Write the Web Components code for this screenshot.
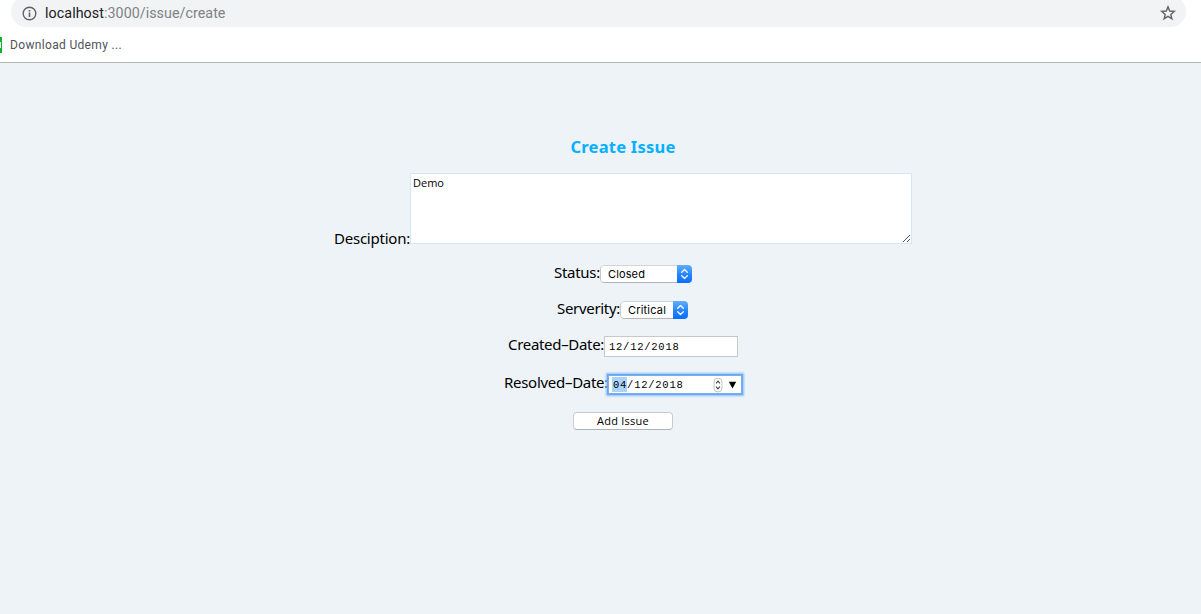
<!DOCTYPE html>
<html lang="en">
<head>
<meta charset="utf-8">
<title>Create Issue</title>
<style>
html,body{margin:0;height:100%;overflow:hidden;background:#eef3f8}
</style>
</head>
<body>
<issue-app></issue-app>
<script>
function define(name, html, setup) {
  const t = document.createElement('template');
  t.innerHTML = html;
  customElements.define(name, class extends HTMLElement {
    connectedCallback() {
      if (this.shadowRoot) return;
      const root = this.attachShadow({ mode: 'open' });
      root.appendChild(t.content.cloneNode(true));
      if (setup) setup(this, root);
    }
  });
}

/* Text tracked so that it fills a given advance width. */
define('fit-text', `<style>:host{display:inline-block;flex:none;white-space:nowrap}span{display:inline-block}</style><span><slot></slot></span>`, (el, root) => {
  const w = Number(el.getAttribute('w'));
  const span = root.querySelector('span');
  const natural = span.getBoundingClientRect().width;
  span.style.letterSpacing = (w - natural) / el.textContent.length + 'px';
  el.style.width = w + 'px';
});

define('browser-bar', `
<style>
:host{display:flex;flex-direction:column;height:63px;box-sizing:border-box;background:#fff;border-bottom:1px solid #b4b4b2;font-family:Roboto,sans-serif;overflow:hidden}
.omni{display:flex;align-items:center;height:31px;margin:-4px 15px 0 11px;border-radius:16px;background:#f1f3f4;padding:0 10px 0 10.5px;box-sizing:border-box;flex:none}
.info{flex:none;margin-top:3px}
.star{margin-top:3px}
.url{margin-left:8.5px;flex:1;font-size:14.3px;line-height:18px;color:#202124;margin-top:3px}
.path{color:#7d8387}
.marks{display:flex;align-items:center;height:18px;margin-top:9px;font-size:12px;line-height:18px;color:#505357}
.fav{width:2px;height:16px;background:#0cb52a;margin-right:8px;display:flex;align-items:center}
.fav i{width:1px;height:6px;background:#fff}
</style>
<div class="omni">
<svg class="info" width="15" height="15" viewBox="0 0 15 15"><circle cx="7.5" cy="7.5" r="6.3" fill="none" stroke="#5f6368" stroke-width="1.4"/><path d="M6.7 6.6h1.6v4.4H6.7zM6.7 4h1.6v1.6H6.7z" fill="#5f6368"/></svg>
<div class="url"><fit-text w="59">localhost</fit-text><fit-text class="path" w="121.5">:3000/issue/create</fit-text></div>
<svg class="star" width="16" height="16" viewBox="0 0 16 16"><path d="M8 1.8L9.7 6l4.6.4-3.5 3 1.1 4.4L8 11.4l-3.9 2.4 1.1-4.4-3.5-3L6.3 6z" fill="none" stroke="#5f6368" stroke-width="1.4"/></svg>
</div>
<div class="marks"><span class="fav"><i></i></span><fit-text w="112">Download Udemy ...</fit-text></div>`);

define('form-row', `
<style>
:host{display:flex;align-items:flex-start;justify-content:flex-start;font:15px/20px "Noto Sans","Open Sans",sans-serif;color:#000}
</style><slot></slot>`);

define('text-area', `
<style>
:host{display:block;position:relative;box-sizing:border-box;width:502px;height:71px;border:1px solid #d0eaf5;background:#fff;padding:2px 2px;font:11px/14px "Open Sans","Noto Sans",sans-serif}
svg{position:absolute;right:0;bottom:0}
</style><slot></slot>
<svg width="9" height="9" viewBox="0 0 9 9" shape-rendering="crispEdges"><path d="M1 7h1v1H1zM2 6h1v1H2zM3 5h1v1H3zM4 4h1v1H4zM5 3h1v1H5zM6 2h1v1H6zM7 1h1v1H7zM5 7h1v1H5zM6 6h1v1H6zM7 5h1v1H7z" fill="#555"/></svg>`);

define('mac-select', `
<style>
:host{display:flex;box-sizing:border-box;height:18px;border-radius:4px;overflow:hidden;background:#fff;font:11px/17px Inter,sans-serif}
.v{flex:1;box-sizing:border-box;border:1px solid #c4c7ca;border-top-color:#d2d5d8;border-bottom-color:#b2b5b8;border-right:0;border-radius:4px 0 0 4px;padding-left:7px}
.b{width:15px;background:linear-gradient(#61aefa,#2385fb 55%,#0a6cff);display:block}
</style>
<div class="v"><slot></slot></div>
<svg class="b" width="15" height="18" viewBox="0 0 15 18"><path d="M4.7 7.3l2.8-2.8 2.8 2.8M4.7 10.7l2.8 2.8 2.8-2.8" fill="none" stroke="#fff" stroke-width="1.3" stroke-linecap="round" stroke-linejoin="round"/></svg>`);

define('date-field', `
<style>
:host{display:flex;align-items:center;box-sizing:border-box;width:134px;height:21px;border:1px solid #c8c8c8;background:#fff;padding-left:4px;font:10.5px/15px "Liberation Mono",monospace;color:#000}
::slotted(fit-text){padding-top:1px;height:14px}
:host([focused]){border-color:#75b0f3;box-shadow:0 0 0 1px #69aaf5,0 0 2px 2px #8dc0f8;height:19px}
.ctl{display:none;margin-left:auto;margin-right:4px;align-items:center;gap:5px}
:host([focused]) .ctl{display:flex}
</style><slot></slot>
<span class="ctl">
<svg width="10" height="16" viewBox="0 0 10 16"><rect x="1" y="1" width="8" height="14" rx="4" fill="#fff" stroke="#c5c5c5"/><path d="M3.1 6.3L5 4.1l1.9 2.2M3.1 9.7L5 11.9l1.9-2.2" fill="none" stroke="#444" stroke-width="1.1"/></svg>
<svg width="9" height="8" viewBox="0 0 9 8"><path d="M.8.7h7.4L4.5 7.5z" fill="#000"/></svg>
</span>`);

define('mac-button', `
<style>
:host{display:flex;justify-content:center;box-sizing:border-box;width:100px;height:18px;border:1px solid #c8cbce;border-bottom-color:#b0b3b6;border-radius:4px;background:#fff;font:11px/16px "Open Sans","Noto Sans",sans-serif}
</style><slot></slot>`);

define('issue-form', `
<style>
:host{display:flex;flex-direction:column;align-items:center;width:1246px;padding-top:73px;box-sizing:border-box}
h1{margin:0;height:37px;font:bold 16.5px/22px "Noto Sans","Open Sans",sans-serif;color:#05b0ff}
form-row{flex:none}
.desc{height:92px}.desc .l{margin-top:55px}
.pick{height:36px}.pick .l{margin-top:-3px}
.sev{margin-right:1px}
.date1{height:38px;margin-top:-1px}.date1 .l{margin-top:-2px}
.date2{height:38px}.date2 .l{margin-top:-2px}
.date2 date-field{margin-top:1px}
.sel{background:#abd3ff;box-shadow:-1px 0 #abd3ff}
</style>
<h1><fit-text w="105">Create Issue</fit-text></h1>
<form-row class="desc"><fit-text class="l" w="76">Desciption:</fit-text><text-area><fit-text w="31">Demo</fit-text></text-area></form-row>
<form-row class="pick"><fit-text class="l" w="46">Status:</fit-text><mac-select style="width:92px"><fit-text w="37">Closed</fit-text></mac-select></form-row>
<form-row class="pick sev"><fit-text class="l" w="63">Serverity:</fit-text><mac-select style="width:68px"><fit-text w="38">Critical</fit-text></mac-select></form-row>
<form-row class="date1"><fit-text class="l" w="96">Created–Date:</fit-text><date-field><fit-text w="70.5">12/12/2018</fit-text></date-field></form-row>
<form-row class="date2"><fit-text class="l" w="104">Resolved–Date:</fit-text><date-field focused><fit-text class="sel" w="14.1">04</fit-text><fit-text w="56.4">/12/2018</fit-text></date-field></form-row>
<mac-button><fit-text w="52">Add Issue</fit-text></mac-button>`);

define('issue-app', `
<style>:host{display:block;width:1201px;height:614px;overflow:hidden;background:#eef3f8}</style>
<browser-bar></browser-bar><issue-form></issue-form>`);
</script>
</body>
</html>
